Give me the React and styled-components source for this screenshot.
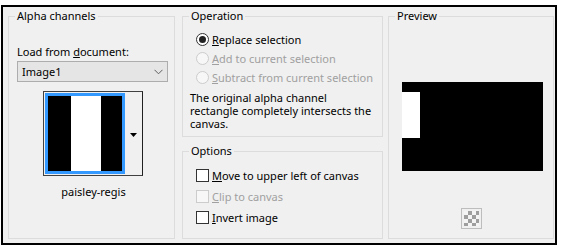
import React from 'react';
import styled, { createGlobalStyle } from 'styled-components';

const GlobalStyle = createGlobalStyle`
  body {
    margin: 0;
    background: #fff;
    font-family: "Noto Sans", "Open Sans", sans-serif;
    font-size: 11px;
    color: #000;
  }
`;

const Frame = styled.div`
  box-sizing: border-box;
  margin: 5px 0 0 1px;
  width: 556px;
  height: 240px;
  border: 2px solid #000;
  background: #f0f0f0;
  display: flex;
  gap: 7px;
  padding: 1px 1px 4px 5px;
  white-space: nowrap;
`;

const Group = styled.fieldset`
  box-sizing: border-box;
  margin: 0;
  padding: 0;
  min-width: 0;
  width: ${p => p.$w}px;
  flex: ${p => (p.$grow ? 1 : 'none')};
  border: 1px solid #dcdcdc;
  display: flex;
  flex-direction: column;
`;

const Title = styled.legend`
  margin-left: 6px;
  padding: 0 2px;
  line-height: 16px;
`;

const Column = styled.div`
  width: 201px;
  display: flex;
  flex-direction: column;
  gap: 6px;
  margin-right: -2px;
`;

const AlphaBody = styled.div`
  padding: 20px 6px 0 8px;
  display: flex;
  flex-direction: column;
`;

const FieldLabel = styled.div`
  line-height: 16px;
  margin-bottom: 1px;
`;

const Select = styled.div`
  box-sizing: border-box;
  width: 151px;
  height: 21px;
  background: #e5e5e5;
  border: 1px solid #adadad;
  display: flex;
  align-items: center;
  justify-content: space-between;
  padding: 0 4px 0 4px;
`;

const ThumbWrap = styled.div`
  align-self: center;
  margin: 9px 0 0 1px;
  display: flex;
  border: 1px solid #404040;
  border-right-color: #202020;
  background: #f0f0f0;
`;

const Swatch = styled.div`
  width: 74px;
  height: 75px;
  margin: 1px 0 1px 1px;
  border: 3px solid #3399ff;
  background: linear-gradient(
    to right,
    #000 0 23px,
    #fff 23px 53px,
    #000 53px
  );
`;

const DropButton = styled.div`
  width: 17px;
  display: flex;
  align-items: center;
  justify-content: center;
  padding-top: 3px;
`;

const Caption = styled.div`
  text-align: center;
  line-height: 16px;
  margin-top: 8px;
  padding-left: 2px;
`;

const OpBody = styled.div`
  padding: 5px 4px 6px 13px;
  display: flex;
  flex-direction: column;
`;

const Choice = styled.div`
  height: ${p => p.$h || 19}px;
  display: flex;
  align-items: center;
  gap: 3px;
  color: ${p => (p.$disabled ? '#a0a0a0' : '#000')};
`;

const Radio = styled.span`
  box-sizing: border-box;
  width: 13px;
  height: 13px;
  border-radius: 50%;
  border: 1px solid ${p => (p.$disabled ? '#cccccc' : '#333')};
  background: ${p => (p.$disabled ? '#f7f7f7' : '#fff')};
  display: flex;
  align-items: center;
  justify-content: center;
  &::after {
    content: '';
    width: 7px;
    height: 7px;
    border-radius: 50%;
    background: ${p => (p.$checked ? '#222' : 'transparent')};
  }
`;

const Check = styled.span`
  box-sizing: border-box;
  width: 13px;
  height: 13px;
  border: 1px solid ${p => (p.$disabled ? '#cccccc' : '#333')};
  background: ${p => (p.$disabled ? '#f7f7f7' : '#fff')};
`;

const Note = styled.p`
  margin: 4px 0 0 -6px;
  line-height: 13px;
`;

const OptBody = styled.div`
  padding: 6px 4px 0 13px;
  display: flex;
  flex-direction: column;
`;

const PreviewBody = styled.div`
  padding-top: 58px;
  display: flex;
  flex-direction: column;
  align-items: center;
`;

const Canvas = styled.div`
  width: 141px;
  height: 89px;
  margin-left: 2px;
  background: #000;
  display: flex;
  align-items: flex-start;
`;

const Layer = styled.div`
  width: 18px;
  height: 46px;
  margin-top: 10px;
  background: #fff;
`;

const Transparent = styled.div`
  box-sizing: border-box;
  margin-top: 37px;
  width: 21px;
  height: 21px;
  border: 1px solid #bdbdbd;
  padding: 2px;
  &::after {
    content: '';
    display: block;
    width: 100%;
    height: 100%;
    background: repeating-conic-gradient(#9e9e9e 0 25%, #f4f4f4 0 50%) 0 0 / 8px 8px;
  }
`;

const Chevron = () => (
  <svg width="9" height="6" viewBox="0 0 9 6">
    <polyline points="0.5,0.8 4.5,4.8 8.5,0.8" fill="none" stroke="#606060" strokeWidth="1" />
  </svg>
);

const Caret = () => (
  <svg width="7" height="4" viewBox="0 0 7 4">
    <polygon points="0,0 7,0 3.5,4" fill="#000" />
  </svg>
);

export default function App() {
  return (
    <>
      <GlobalStyle />
      <Frame>
        <Group $w={167}>
          <Title>Alpha channels</Title>
          <AlphaBody>
            <FieldLabel>Load from <u>d</u>ocument:</FieldLabel>
            <Select>
              <span>Image1</span>
              <Chevron />
            </Select>
            <ThumbWrap>
              <Swatch />
              <DropButton>
                <Caret />
              </DropButton>
            </ThumbWrap>
            <Caption>paisley-regis</Caption>
          </AlphaBody>
        </Group>

        <Column>
          <Group>
            <Title>Operation</Title>
            <OpBody>
              <Choice $h={20}>
                <Radio $checked />
                <span><u>R</u>eplace selection</span>
              </Choice>
              <Choice $disabled>
                <Radio $disabled />
                <span><u>A</u>dd to current selection</span>
              </Choice>
              <Choice $disabled>
                <Radio $disabled />
                <span><u>S</u>ubtract from current selection</span>
              </Choice>
              <Note>
                The original alpha channel<br />
                rectangle completely intersects the<br />
                canvas.
              </Note>
            </OpBody>
          </Group>
          <Group $grow>
            <Title>Options</Title>
            <OptBody>
              <Choice $h={21}>
                <Check />
                <span><u>M</u>ove to upper left of canvas</span>
              </Choice>
              <Choice $h={21} $disabled>
                <Check $disabled />
                <span><u>C</u>lip to canvas</span>
              </Choice>
              <Choice $h={21}>
                <Check />
                <span><u>I</u>nvert image</span>
              </Choice>
            </OptBody>
          </Group>
        </Column>

        <Group $w={166}>
          <Title>Preview</Title>
          <PreviewBody>
            <Canvas>
              <Layer />
            </Canvas>
            <Transparent />
          </PreviewBody>
        </Group>
      </Frame>
    </>
  );
}
